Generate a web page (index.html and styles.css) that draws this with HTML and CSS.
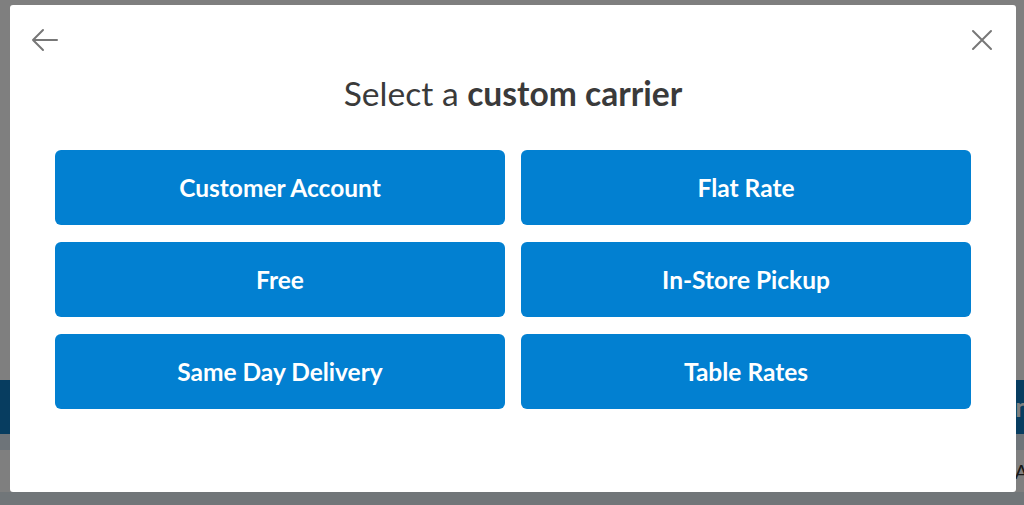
FILE: index.html
```html
<!DOCTYPE html>
<html>
<head>
<meta charset="UTF-8">
<title>Custom carrier</title>
<link rel="stylesheet" href="styles.css">
</head>
<body>
	<!-- page behind the overlay -->
	<div class="page">
		<div class="page-bar"><span class="bar-text">n</span></div>
		<div class="page-strip"></div>
		<div class="page-body"><span class="body-text">A</span></div>
		<div class="page-foot"></div>
	</div>

	<div class="overlay"></div>

	<!-- modal -->
	<div class="modal">
		<div class="modal-top">
			<button class="icon-btn" aria-label="Back">
				<svg width="28" height="28" viewBox="0 0 28 28"><path d="M27 14H3M13 4L3 14l10 10" fill="none" stroke="#777" stroke-width="2" stroke-linecap="round" stroke-linejoin="round"/></svg>
			</button>
			<button class="icon-btn" aria-label="Close">
				<svg width="22" height="22" viewBox="0 0 22 22"><path d="M2 2l18 18M20 2L2 20" fill="none" stroke="#777" stroke-width="2" stroke-linecap="round"/></svg>
			</button>
		</div>
		<h1 class="modal-title">Select a <b>custom carrier</b></h1>
		<div class="carriers">
			<button class="carrier">Customer Account</button>
			<button class="carrier">Flat Rate</button>
			<button class="carrier">Free</button>
			<button class="carrier">In-Store Pickup</button>
			<button class="carrier">Same Day Delivery</button>
			<button class="carrier">Table Rates</button>
		</div>
	</div>
</body>
</html>
```

FILE: styles.css
```css
body {
  margin: 0;
  font-family: Lato, "Open Sans", sans-serif;
  background-color: #fff;
  height: 505px;
  overflow: hidden;
}

.page {
  padding-top: 380px;
}

.page-bar {
  height: 54px;
  background-color: #0e7ac0;
  text-align: right;
}

.bar-text {
  color: #fff;
  font-size: 26px;
  font-weight: bold;
  line-height: 54px;
  margin-right: -6px;
}

.page-strip {
  height: 16px;
  background-color: #dde9f2;
}

.page-body {
  height: 42px;
  background-color: #fff;
  text-align: right;
}

.body-text {
  color: #333;
  font-size: 20px;
  line-height: 42px;
  margin-right: -4px;
}

.page-foot {
  height: 20px;
  background-color: #e3ecf2;
}

.overlay {
  position: fixed;
  inset: 0;
  background-color: rgba(0, 0, 0, 0.5);
}

.modal {
  position: fixed;
  left: 10px;
  top: 5px;
  width: 1006px;
  height: 487px;
  box-sizing: border-box;
  background-color: #fff;
  border-radius: 3px;
  padding: 21px 45px 0 45px;
}

.modal-top {
  display: flex;
  justify-content: space-between;
  align-items: center;
  margin: 0 -22px 0 -25px;
}

.icon-btn {
  background: none;
  border: none;
  padding: 0;
  cursor: pointer;
  display: flex;
}

.modal-title {
  margin: 19px 0 37px;
  text-align: center;
  font-size: 33.6px;
  font-weight: normal;
  color: #3a3a3a;
  line-height: 40px;
}

.modal-title b {
  font-weight: bold;
}

.carriers {
  display: grid;
  grid-template-columns: 1fr 1fr;
  gap: 17px 16px;
}

.carrier {
  height: 75px;
  border: none;
  border-radius: 6px;
  background-color: #0280d1;
  color: #fff;
  font-family: Lato, "Open Sans", sans-serif;
  font-size: 24.5px;
  font-weight: bold;
  padding-top: 0;
  cursor: pointer;
}
```
